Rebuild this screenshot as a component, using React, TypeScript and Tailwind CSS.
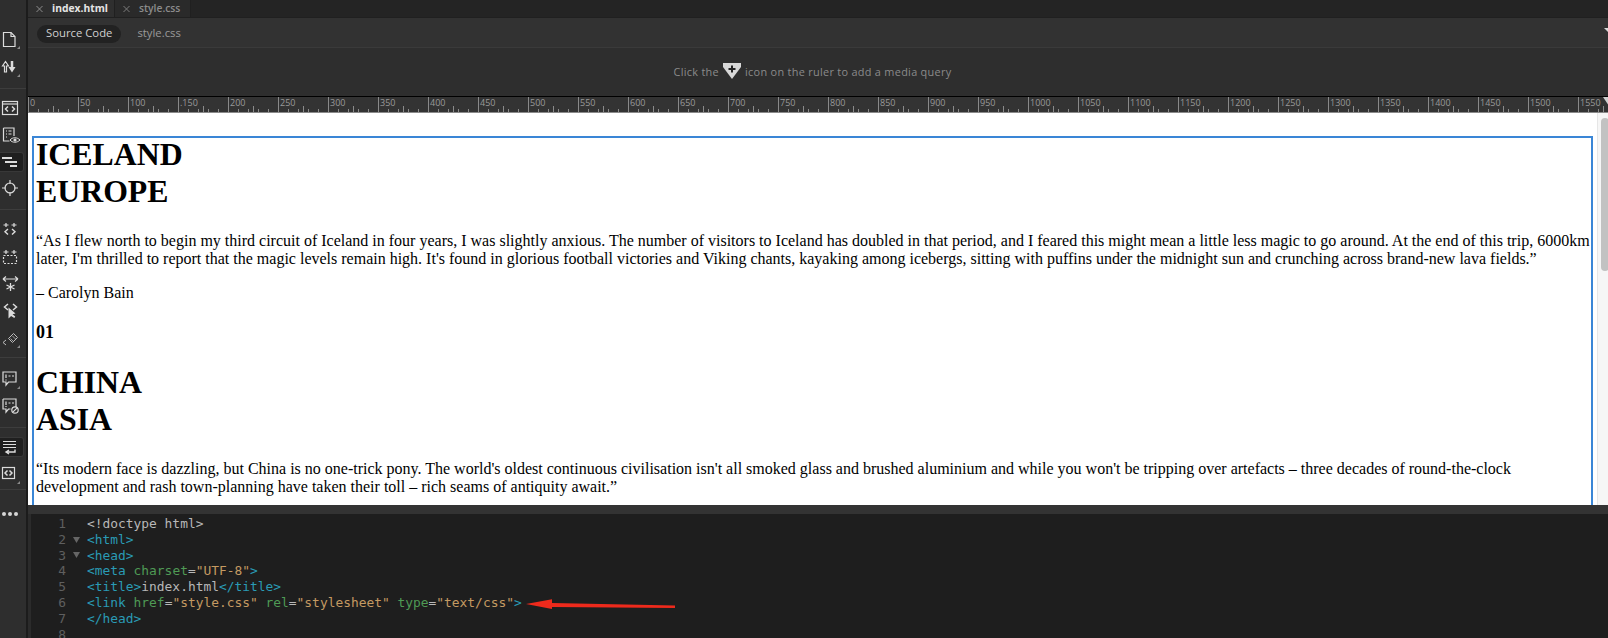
import React from "react";

const Corner = () => <path d="M17 22h3v-3z" fill="#8a8a8a" stroke="none" />;
const S = ({ children, h, active = false }: { children: React.ReactNode; h: number; active?: boolean }) => (
  <div className={`flex w-[24px] shrink-0 items-center rounded-r-[3px] ${active ? "border-y border-r border-[#383838] bg-[#1f1f1f]" : ""}`} style={{ height: h }}>
    <svg width="24" height="24" viewBox="0 0 24 24" fill="none" stroke="#dcdcdc" strokeWidth="1.2" className="shrink-0">{children}</svg>
  </div>
);

const Ruler = () => {
  const marks = Array.from({ length: 32 }, (_, i) => i * 50);
  return (
    <div className="flex h-[17px] shrink-0 overflow-hidden border-y border-t-black border-b-[#8a8a8a] bg-[#333333]">
      {marks.map((m) => (
        <div key={m} className="relative h-full w-[50px] shrink-0 border-l border-[#8a8a8a]">
          <span className="block pl-[1px] text-[9px] leading-[11px] text-[#9a9a9a]">{m === 150 ? ".150" : m}</span>
          <svg className="absolute bottom-0 left-0" width="50" height="6">
            {[10, 20, 30, 40].map((x) => <line key={x} x1={x - 0.5} x2={x - 0.5} y1="3" y2="6" stroke="#8a8a8a" />)}
            <line x1="24.5" x2="24.5" y1="0" y2="6" stroke="#8a8a8a" />
          </svg>
        </div>
      ))}
    </div>
  );
};

const C = ({ c, children }: { c: string; children: React.ReactNode }) => <span style={{ color: c }}>{children}</span>;
const tag = "#2a9bb5", attr = "#4f9a55", str = "#c49a62", plain = "#b8b8b8";

const codeLines: React.ReactNode[] = [
  <C c={plain}>{"<!doctype html>"}</C>,
  <C c={tag}>{"<html>"}</C>,
  <C c={tag}>{"<head>"}</C>,
  <><C c={tag}>{"<meta"}</C> <C c={attr}>charset</C><C c={plain}>=</C><C c={str}>"UTF-8"</C><C c={tag}>{">"}</C></>,
  <><C c={tag}>{"<title>"}</C><C c={plain}>index.html</C><C c={tag}>{"</title>"}</C></>,
  <><C c={tag}>{"<link"}</C> <C c={attr}>href</C><C c={plain}>=</C><C c={str}>"style.css"</C> <C c={attr}>rel</C><C c={plain}>=</C><C c={str}>"stylesheet"</C> <C c={attr}>type</C><C c={plain}>=</C><C c={str}>"text/css"</C><C c={tag}>{">"}</C></>,
  <C c={tag}>{"</head>"}</C>,
  <span />,
];

const X = ({ c }: { c: string }) => (
  <svg width="16" height="8" viewBox="0 0 16 8" className="shrink-0" stroke={c} strokeWidth="1"><path d="M0.500 1l6 6M6.500 1l-6 6" /></svg>
);

export default function App() {
  return (
    <div className="relative flex h-[638px] w-[1608px] overflow-hidden bg-[#2b2b2b] font-['Open_Sans',sans-serif]">
      {/* tool bar */}
      <aside className="flex h-full w-[28px] shrink-0 flex-col border-r-[2px] border-[#1c1c1c] bg-[#2e2e2e] pt-[25px]">
        <S h={28}><path d="M3.500 5.500h7.500l4 4v10H3.500z" /><path d="M11 5.500v4h4" /><Corner /></S>
        <S h={28}><path d="M4.500 17h2v-6h2L5.500 6.500 2.500 11h2z" /><path d="M12 6v7" strokeWidth="2.500" /><path d="M8.500 12h7L12 17.500z" fill="#dcdcdc" stroke="none" /><Corner /></S>
        <div className="mb-[6px] mt-[7px] h-px w-[26px] bg-[#3d3d3d]" />
        <S h={26}><rect x="2.500" y="5.500" width="15" height="13" /><path d="M2.500 8h15" /><path d="M8 10.500 5.500 13 8 15.500M12 10.500l2.500 2.500-2.500 2.500" strokeWidth="1.500" /></S>
        <S h={27}><path d="M3.500 5h10.500v8M3.500 5v13h6" /><path d="M6 8h1M8.500 8h3M6 11h1M8.500 11h3M6 14h1" /><path d="M10 17c2.500-3 7-3 10 0-3 3-7.500 3-10 0z" fill="#2e2e2e" strokeWidth="1" /><circle cx="15" cy="17" r="1.600" fill="#dcdcdc" stroke="none" /></S>
        <div className="h-[4px] shrink-0" />
        <S h={20} active><path d="M2 8h10M5 12h12M10 16h7" strokeWidth="1.800" /></S>
        <S h={32}><circle cx="10" cy="12" r="5" /><path d="M10 4v4M10 16v4M2 12h4M14 12h4" /></S>
        <div className="mb-[6px] mt-[5px] h-px w-[26px] bg-[#3d3d3d]" />
        <S h={26}><path d="M3.500 8h5M6 6v4M11.500 8h5M14 6v4" /><path d="M8 12l-3 2.750L8 17.500M12 12l3 2.750-3 2.750" strokeWidth="1.400" /></S>
        <S h={30}><path d="M3.500 7h5M6 5v4M11.500 7h5M14 5v4" /><rect x="3.500" y="10.500" width="13" height="8" strokeDasharray="2 1.500" /></S>
        <S h={24}><path d="M3 7h15M3 7l3-2.500M3 7l3 2.500M18 7l-3-2.500M18 7l-3 2.500" /><path d="M10.500 11v8M6.500 13l8 4M14.500 13l-8 4" strokeWidth="1.300" /></S>
        <S h={30}><path d="M8 5 4.500 8 8 11M13 5l3.500 3-3.500 3" strokeWidth="1.500" /><path d="M8.500 8.500v11l2.600-2.600 3.200 2.100 1-1.500-2.800-2.300 3-.8z" fill="#dcdcdc" stroke="none" /></S>
        <S h={24}><path d="M6 14 3 16.500 6 19M8.500 12.500l5-5 4 4-5 5z" strokeWidth="1" stroke="#bdbdbd" /><path d="M10.500 12.500l3 3M12.500 10l3 3" strokeWidth="0.800" stroke="#bdbdbd" /><Corner /></S>
        <div className="mb-[7px] mt-[7px] h-px w-[26px] bg-[#3d3d3d]" />
        <S h={28}><path d="M3 5h13v10H8.500L6 18v-3H3z" /><path d="M6 7.500v3.500M6 12.500v1M8.500 9h2M12 9h2" strokeWidth="1.200" /><Corner /></S>
        <S h={26}><path d="M3 5h13v8M3 5v10h3v3l2.500-3h2" /><path d="M6 7.500v3.500M6 12v1M8.500 9h2M12 9h2" strokeWidth="1.200" /><circle cx="15" cy="16" r="3.200" /><path d="M12.800 18.200l4.400-4.400" /></S>
        <div className="mb-[9px] mt-[8px] h-px w-[26px] bg-[#3d3d3d]" />
        <S h={20} active><path d="M3 6.500h13M3 9.500h13M3 12.500h13" strokeWidth="1.200" /><path d="M15 14.500v2.500H6M9 15 6 17l3 2" strokeWidth="1.400" /></S>
        <S h={32}><rect x="2.500" y="6.500" width="12" height="11" /><path d="M7.500 9.500 5 12l2.500 2.500M9.500 9.500 12 12l-2.500 2.500" strokeWidth="1.500" /><path d="M17 23h3v-3z" fill="#8a8a8a" stroke="none" /></S>
        <div className="h-px w-[26px] bg-[#3d3d3d]" />
        <div className="ml-[2px] mt-[22px] flex gap-[2px]">
          <span className="h-[4px] w-[4px] rounded-full bg-[#d6d6d6]" />
          <span className="h-[4px] w-[4px] rounded-full bg-[#d6d6d6]" />
          <span className="h-[4px] w-[4px] rounded-full bg-[#d6d6d6]" />
        </div>
      </aside>

      <main className="flex min-w-0 flex-1 flex-col">
        {/* document tabs */}
        <div className="flex h-[18px] shrink-0 items-stretch border-b border-[#202020] bg-[#242424] text-[10.300px]">
          <div className="flex w-[87px] items-center border-r border-[#202020] bg-[#2f2f2f] pl-[8px]">
            <X c="#8c8c8c" />
            <span className="font-bold text-[#e4e4e4]">index.html</span>
          </div>
          <div className="flex w-[76px] items-center border-r border-[#202020] bg-[#2a2a2a] pl-[8px]">
            <X c="#7a7a7a" />
            <span className="font-semibold text-[#8c8c8c]">style.css</span>
          </div>
        </div>
        {/* related files */}
        <div className="flex h-[30px] shrink-0 items-center gap-[16px] border-b border-[#3a3a3a] bg-[#323232] pl-[9px] pt-[2px] text-[11.300px]">
          <span className="flex h-[18px] items-center rounded-full bg-[#222222] px-[9px] text-[#d0d0d0]">Source Code</span>
          <span className="text-[#9a9a9a]">style.css</span>
        </div>
        {/* media query hint */}
        <div className="flex h-[48px] shrink-0 items-center justify-center gap-[4px] bg-[#2e2e2e] pr-[11px] text-[10.900px] tracking-[0.3px] text-[#8b8b8b]">
          <span>Click the</span>
          <svg width="18" height="16" viewBox="0 0 18 16" className="mb-[2px]">
            <path d="M0 0h18v4L9 16 0 4z" fill="#d8d8d8" />
            <path d="M9 2.500v7M5.500 6h7" stroke="#222" strokeWidth="2" />
          </svg>
          <span>icon on the ruler to add a media query</span>
        </div>
        <div className="relative">
          <Ruler />
          <div className="absolute -right-[7px] top-[1px] h-0 w-0 border-x-[6px] border-t-[9px] border-x-transparent border-t-[#cfcfcf]" />
        </div>
        {/* live view */}
        <div className="flex h-[392px] shrink-0 overflow-hidden bg-white">
          <div className="min-w-0 flex-1 pl-[4px] pr-[4px] pt-[23px]">
            <div className="h-[400px] border-2 border-[#3a86d6] pl-[2px] font-['Liberation_Serif',serif] text-[16px] leading-[18px] text-black">
              <h1 className="-mt-[2px] text-[31.800px] font-bold leading-[37px]">ICELAND<br />EUROPE</h1>
              <p className="mt-[22px]">“As I flew north to begin my third circuit of Iceland in four years, I was slightly anxious. The number of visitors to Iceland has doubled in that period, and I feared this might mean a little less magic to go around. At the end of this trip, 6000km later, I'm thrilled to report that the magic levels remain high. It's found in glorious football victories and Viking chants, kayaking among icebergs, sitting with puffins under the midnight sun and crunching across brand-new lava fields.”</p>
              <p className="mt-[16px]">– Carolyn Bain</p>
              <h2 className="mt-[20px] text-[18px] font-bold leading-[21px]">01</h2>
              <h1 className="mt-[21px] text-[31.800px] font-bold leading-[37px]">CHINA<br />ASIA</h1>
              <p className="mt-[22px]">“Its modern face is dazzling, but China is no one-trick pony. The world's oldest continuous civilisation isn't all smoked glass and brushed aluminium and while you won't be tripping over artefacts – three decades of round-the-clock development and rash town-planning have taken their toll – rich seams of antiquity await.”</p>
            </div>
          </div>
          <div className="w-[11px] shrink-0 border-l border-[#e6e6e6] bg-[#f6f6f6] pl-[3px] pt-[5px]">
            <div className="h-[153px] w-[8px] rounded-l-full rounded-r-full bg-[#c2c2c2]" />
          </div>
        </div>
        {/* splitter */}
        <div className="h-[9px] shrink-0 bg-[#333333]" />
        {/* code view */}
        <div className="ml-[3px] min-h-0 flex-1 overflow-hidden bg-[#1e1e1e] pt-[2px] font-['DejaVu_Sans_Mono',monospace] text-[12.900px] leading-[15.800px]">
          {codeLines.map((line, i) => (
            <div key={i} className="flex h-[15.800px] whitespace-pre">
              <span className="w-[35px] shrink-0 text-right text-[#5f5f5f]">{i + 1}</span>
              <span className="flex w-[21px] shrink-0 items-center pl-[7px]">
                {i === 1 || i === 2 ? <svg width="7" height="6" viewBox="0 0 7 6"><path d="M0 0h7L3.500 6z" fill="#666666" /></svg> : null}
              </span>
              <span>{line}</span>
            </div>
          ))}
        </div>
      </main>

      {/* small clipped menu arrow, top right */}
      <svg className="absolute right-0 top-[28px]" width="4" height="5" viewBox="0 0 4 5">
        <path d="M0 0h4v4z" fill="#d8d8d8" />
      </svg>
      {/* annotation arrow */}
      <svg className="absolute left-[520px] top-[595px]" width="160" height="20" viewBox="0 0 160 20">
        <path d="M6 9 32 4.300 32 8 155 10.500 155 13 32 12 32 14z" fill="#ee2a1c" />
      </svg>
    </div>
  );
}
